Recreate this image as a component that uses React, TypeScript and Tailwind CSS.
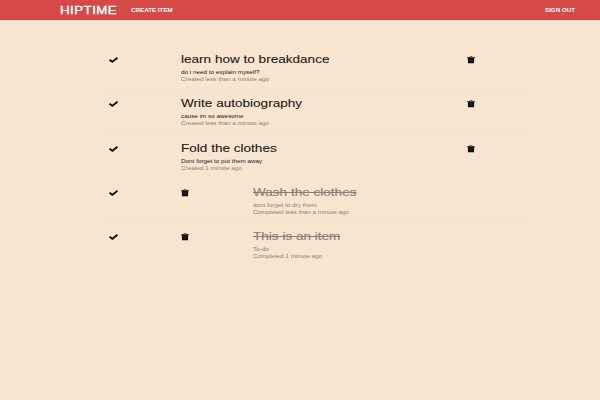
import React from "react";

type Item = { title: string; note: string; stamp: string; done?: boolean };

const items: Item[] = [
  { title: "learn how to breakdance", note: "do i need to explain myself?", stamp: "Created less than a minute ago" },
  { title: "Write autobiography", note: "cause im so awesome", stamp: "Created less than a minute ago" },
  { title: "Fold the clothes", note: "Dont forget to put them away", stamp: "Created 1 minute ago" },
  { title: "Wash the clothes", note: "dont forget to dry them", stamp: "Completed less than a minute ago", done: true },
  { title: "This is an item", note: "To-do", stamp: "Completed 1 minute ago", done: true },
];

function Check() {
  return (
    <svg className="mt-[11px] block h-[6px] w-[9px]" viewBox="0 0 9 6" fill="none" stroke="#0b0b0b" strokeWidth="1.8">
      <path d="M0.5 2.7 L3.4 4.8 L8.5 0.8" />
    </svg>
  );
}

function Trash() {
  return (
    <svg className="mt-[10px] block h-[8px] w-[8px]" viewBox="0 0 8 8">
      <path d="M0 1 H2.3 L2.8 0.3 H5.2 L5.7 1 H8 V2 H0 Z" fill="#4a4540" />
      <path d="M0.8 2 H7.2 L7 7.2 H1 Z" fill="#0b0b0b" />
      <path d="M2.9 3 V6 M4 3 V6 M5.1 3 V6" stroke="#4a443e" strokeWidth="0.4" />
    </svg>
  );
}

function Details({ item }: { item: Item }) {
  const small = "block h-[7px] text-[5.3px] leading-[7px] origin-left scale-x-[1.195]";
  return (
    <div className={item.done ? "w-[214px] pt-px whitespace-nowrap text-[#8b8075]" : "w-[286px] pt-px whitespace-nowrap text-[#1a1816]"}>
      <h2 className={"h-[22px] origin-left scale-x-[1.205] pt-[5px] text-[11.25px] leading-[14px] " + (item.done ? "line-through decoration-[1.3px] [-webkit-text-stroke:0.15px_#8b8075]" : "[-webkit-text-stroke:0.1px_#1a1816]")}>
        {item.title}
      </h2>
      <p className={small}>{item.note}</p>
      <p className={small + " text-[#8b8075]"}>{item.stamp}</p>
    </div>
  );
}

export default function App() {
  return (
    <div className="h-[400px] w-[600px] overflow-hidden bg-[#f7e5d0] font-['Liberation_Sans',Arial,sans-serif]">
      <header className="flex h-[20px] items-center border-b border-[#c94340] bg-[#d54a49] pr-[25px] pl-[59.5px] whitespace-nowrap text-white">
        <div className="w-[71.5px]">
          <span className="block w-max origin-left scale-x-[1.27] text-[10.5px] leading-[20px] tracking-[0.35px] [-webkit-text-stroke:0.35px_white]">HIPTIME</span>
        </div>
        <a className="origin-left scale-x-[1.2] text-[5.2px] leading-[20px] font-bold">CREATE ITEM</a>
        <a className="ml-auto origin-right scale-x-[1.2] text-[5.2px] leading-[20px] font-bold">SIGN OUT</a>
      </header>
      <main className="mt-[26.2px] ml-[104px] w-[429px]">
        {items.map((item) => (
          <section key={item.title} className="flex h-[44.3px] border-b border-[#f3e3d1] pl-[5px]">
            <div className="w-[72px]"><Check /></div>
            {item.done ? (
              <>
                <div className="w-[72px]"><Trash /></div>
                <Details item={item} />
              </>
            ) : (
              <>
                <Details item={item} />
                <Trash />
              </>
            )}
          </section>
        ))}
      </main>
    </div>
  );
}
